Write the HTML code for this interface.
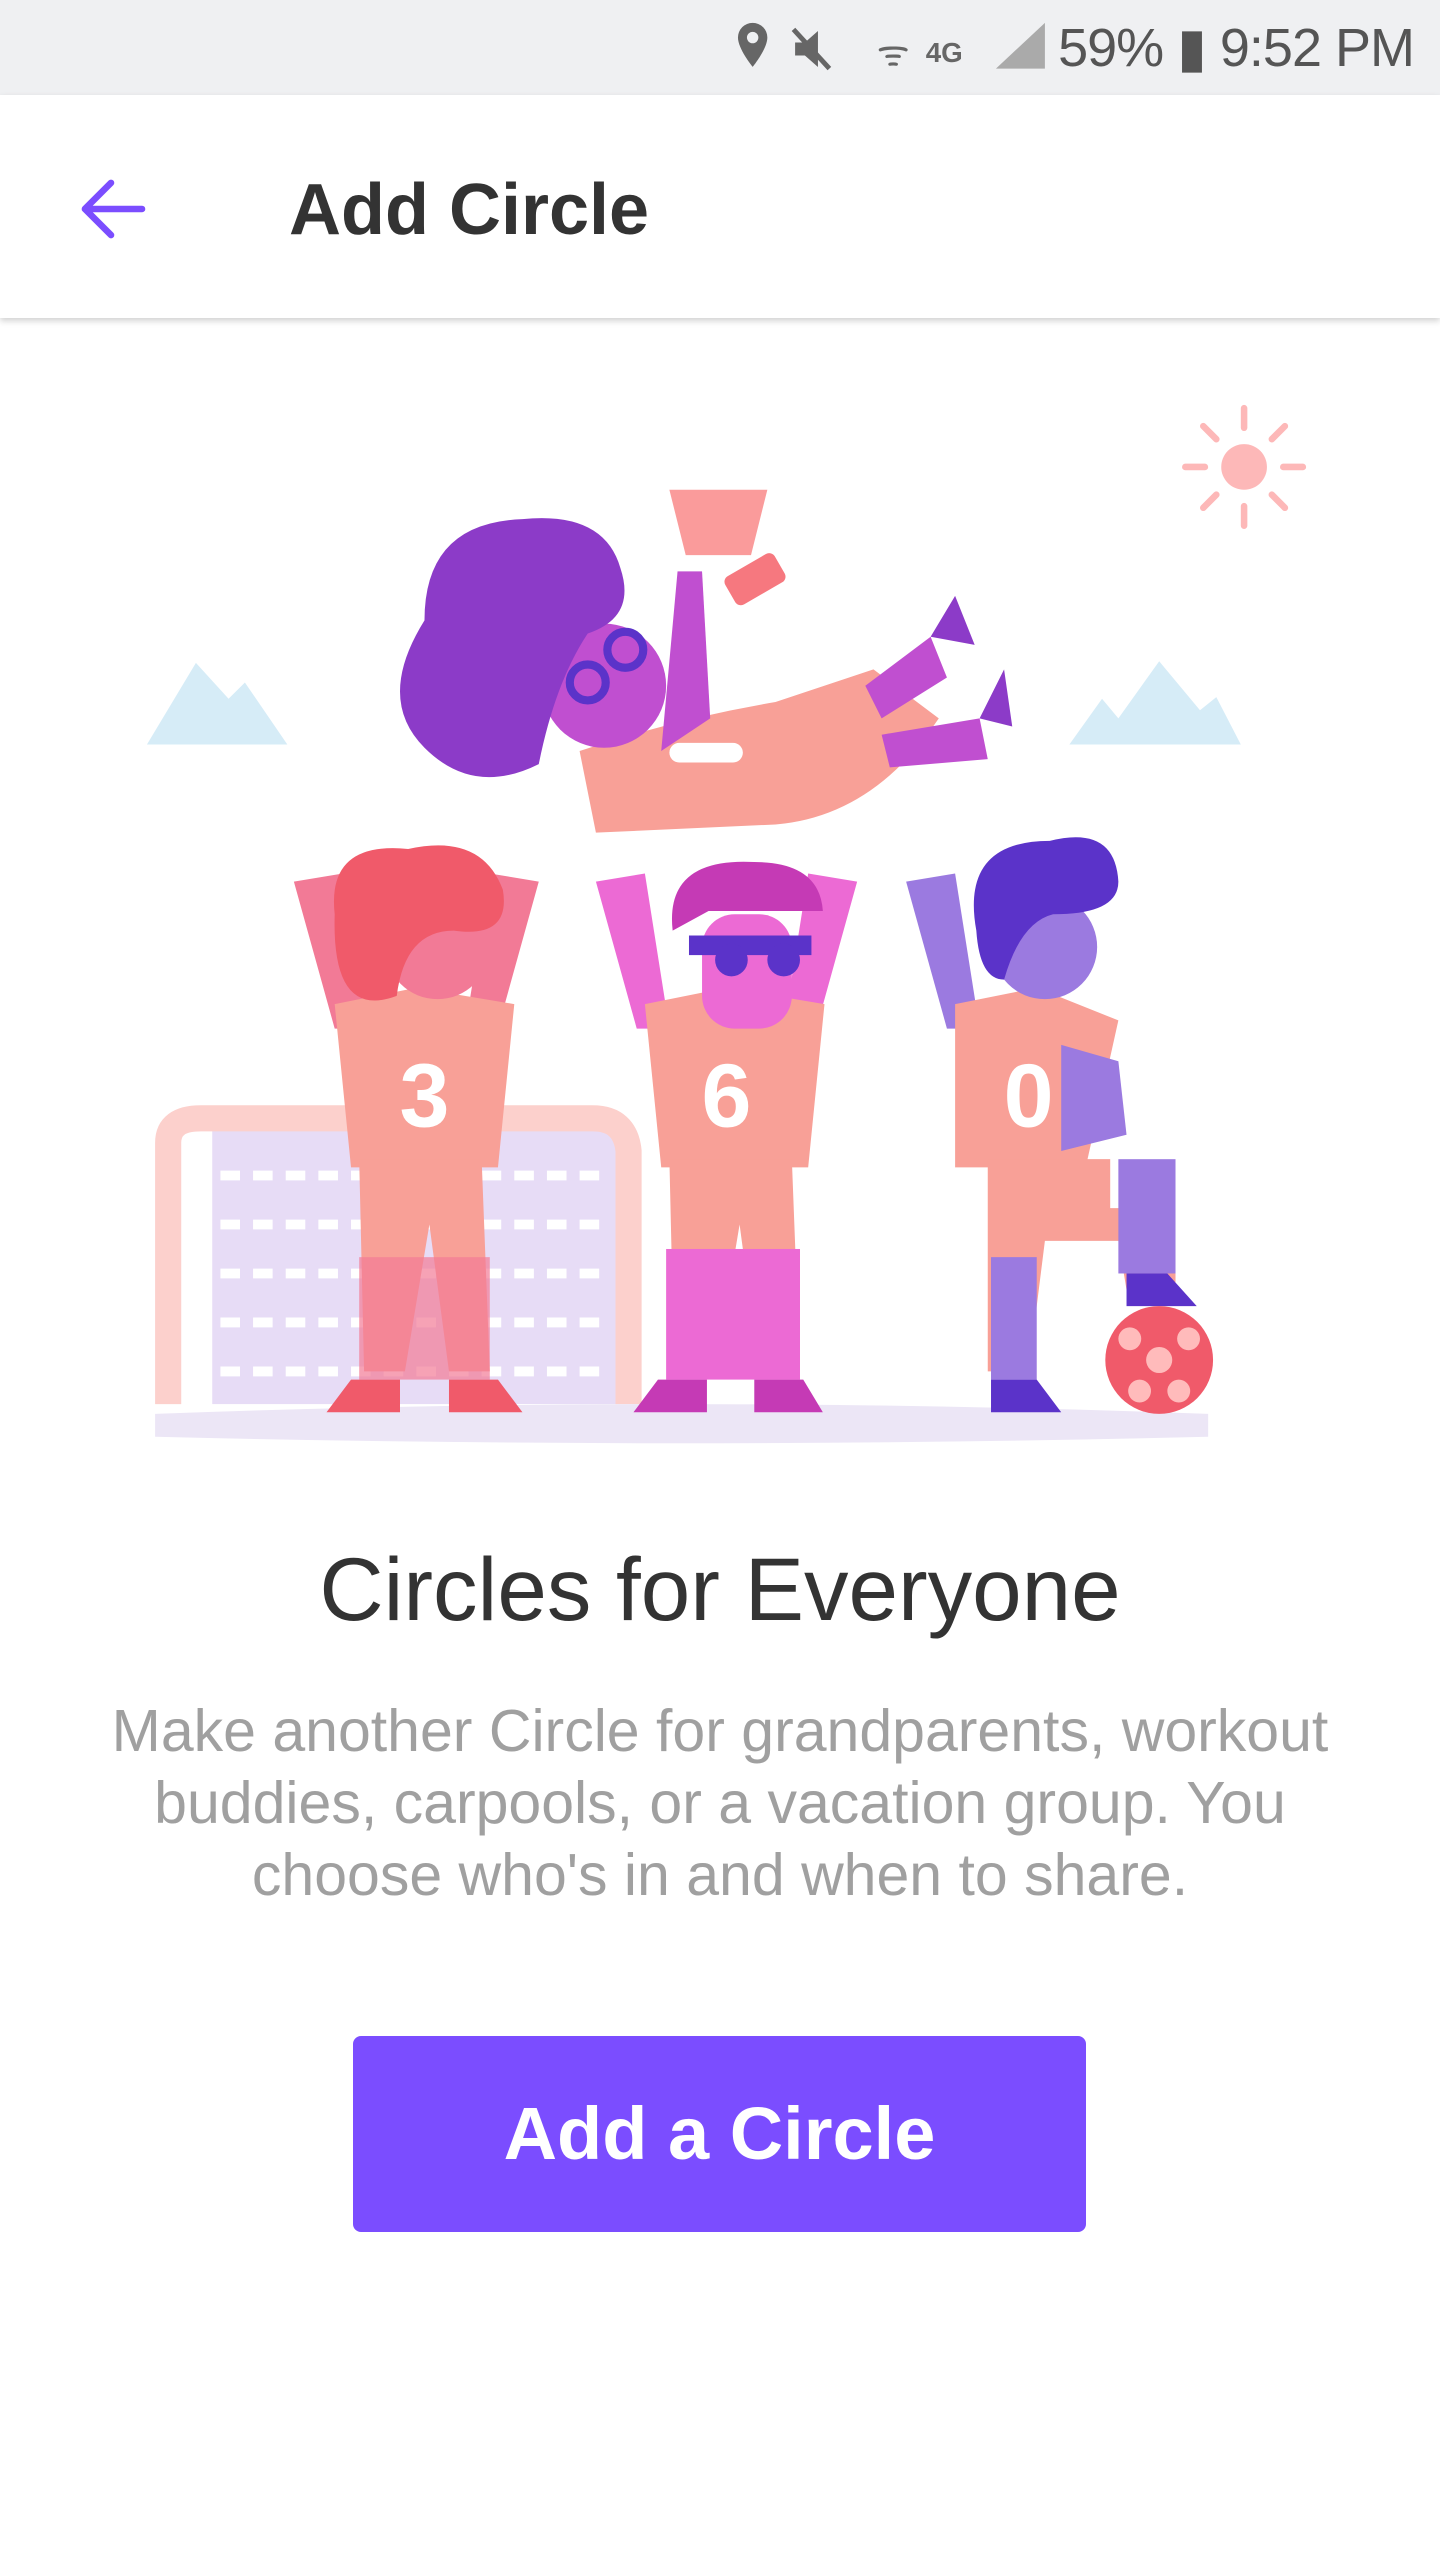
<!DOCTYPE html>
<html><head><meta charset="utf-8"><style>
html,body{margin:0;padding:0;width:1440px;height:2560px;background:#fff;overflow:hidden;font-family:"Liberation Sans",sans-serif;position:relative}
.sb{position:absolute;left:0;top:0;width:1440px;height:95px;background:#eff0f2}
.sbt{position:absolute;right:26px;top:16px;font-size:54px;color:#555;letter-spacing:-1px}
.bar{position:absolute;left:0;top:95px;width:1440px;height:223px;background:#fff;box-shadow:0 3px 6px rgba(0,0,0,.18)}
.title{position:absolute;left:289px;top:74px;font-size:72px;color:#333;font-weight:bold}
h1{position:absolute;left:0;width:1440px;top:1538px;margin:0;text-align:center;font-weight:normal;font-size:89px;color:#333}
.body{position:absolute;left:40px;width:1360px;top:1695px;text-align:center;font-size:59px;line-height:72px;color:#a0a0a0}
.btn{position:absolute;left:353px;top:2036px;width:733px;height:196px;background:#7b4dff;border-radius:8px;color:#fff;font-weight:bold;font-size:74px;text-align:center;line-height:196px}
svg{position:absolute;left:0;top:0}
</style></head><body>
<div class="sb"><div class="sbt">59%&nbsp;▮ 9:52 PM</div></div>
<svg width="1440" height="2560" viewBox="0 0 882 1568">
<g fill="#666"><path d="M461 14a9 9 0 0 1 9 9c0 7-9 18-9 18s-9-11-9-18a9 9 0 0 1 9-9z"/><circle cx="461" cy="23" r="3.5" fill="#eff0f2"/>
<path d="M487 26h6l8-7v22l-8-7h-6z"/><path d="M486 18l22 24" stroke="#666" stroke-width="3"/>
<text x="537" y="40" font-size="22" font-family="Liberation Sans">ᯤ</text><text x="567" y="38" font-size="17" font-family="Liberation Sans" font-weight="bold">4G</text>
<path d="M610 42l30-28v28z" fill="#aaa"/></g>
</svg>
<div class="bar"><div class="title">Add Circle</div></div>
<svg width="1440" height="2560" viewBox="0 0 882 1568">
<path d="M87 127H52M68 111L52 127L68 143" stroke="#7b4dff" stroke-width="4" fill="none" stroke-linecap="round" stroke-linejoin="round" transform="translate(0,1)"/>
<circle cx="762" cy="286" r="14" fill="#fdb8b8"/>
<g stroke="#fdb8b8" stroke-width="4" stroke-linecap="round"><path d="M762 250v12M762 310v12M726 286h12M786 286h12M737 261l8 8M779 303l8 8M787 261l-8 8M745 303l-8 8"/></g>
<path d="M90 456l30-50 20 22 10-10 26 38z" fill="#d6ecf7"/>
<path d="M655 456l20-28 10 12 25-35 25 30 10-8 15 29z" fill="#d6ecf7"/>
<rect x="130" y="692" width="250" height="168" fill="#e7dcf6"/>
<g stroke="#fff" stroke-width="6" stroke-dasharray="12 8"><path d="M135 720h240M135 750h240M135 780h240M135 810h240M135 840h240"/></g>
<path d="M103 860V700q0-15 20-15h240q20 0 22 20v155" stroke="#fcd0cc" stroke-width="16" fill="none"/>
<path d="M95 866q320-12 645 0v14q-320 8-645 0z" fill="#ece6f6"/>
<path d="M355 460q60-20 120-30l60-20 40 30q-40 60-100 65l-110 5z" fill="#f8a097"/>
<path d="M530 420l40-30 10 25-40 25zM540 450l60-10 5 25-60 5z" fill="#c04fd0"/>
<path d="M570 390l15-25 12 30zM600 440l15-30 5 35z" fill="#8c3bc8"/>
<rect x="410" y="455" width="45" height="12" rx="6" fill="#fff"/>
<path d="M415 350l15 0 5 90-30 20z" fill="#c04fd0"/>
<path d="M410 300h60l-10 40h-40z" fill="#fa9b9b"/><rect x="445" y="345" width="35" height="20" rx="4" fill="#f6787f" transform="rotate(-30 462 355)"/>
<circle cx="370" cy="420" r="38" fill="#c04fd0"/>
<path d="M260 380q0-60 60-62q50-5 60 30q10 30-20 40q-20 30-30 80q-40 20-70-10q-30-30 0-78z" fill="#8c3bc8"/>
<circle cx="360" cy="418" r="11" fill="none" stroke="#5b33c9" stroke-width="5"/><circle cx="383" cy="398" r="11" fill="none" stroke="#5b33c9" stroke-width="5"/>
<g><path d="M180 540l25 90 20 0-15-95zM330 540l-25 90-20 0 15-95z" fill="#f27a96"/>
<path d="M205 615l50-10 60 10-10 100h-90z" fill="#f8a097"/>
<path d="M220 710h75l5 130h-25l-12-90-15 90h-25z" fill="#f8a097"/>
<rect x="220" y="770" width="80" height="75" fill="#f27a96" opacity=".7"/>
<path d="M200 865l15-20h30v20zM275 865v-20h30l15 20z" fill="#f05a6a"/>
<circle cx="268" cy="580" r="32" fill="#f27a96"/>
<path d="M205 560q-5-45 45-40q45-10 58 25q5 30-30 25q-30 0-35 40q-40 15-38-50z" fill="#f05a6a"/>
<text x="260" y="690" font-size="55" font-weight="bold" fill="#fff" text-anchor="middle" font-family="Liberation Sans">3</text></g>
<g><path d="M365 540l25 90 20 0-15-95zM525 540l-25 90-20 0 15-95z" fill="#ec6ad4"/>
<path d="M395 615l50-10 60 10-10 100h-90z" fill="#f8a097"/>
<path d="M410 710h75l5 130h-25l-12-90-15 90h-25z" fill="#f8a097"/>
<rect x="408" y="765" width="82" height="80" fill="#ec6ad4"/>
<path d="M388 865l15-20h30v20zM462 865v-20h30l12 20z" fill="#c53ab5"/>
<rect x="430" y="560" width="55" height="70" rx="20" fill="#ec6ad4"/>
<path d="M412 570q-5-45 50-42q40 0 42 30h-70z" fill="#c53ab5"/>
<rect x="422" y="573" width="75" height="12" fill="#5b33c9"/><circle cx="448" cy="588" r="10" fill="#5b33c9"/><circle cx="480" cy="588" r="10" fill="#5b33c9"/>
<text x="445" y="690" font-size="55" font-weight="bold" fill="#fff" text-anchor="middle" font-family="Liberation Sans">6</text></g>
<g><path d="M555 540l25 90 20 0-15-95z" fill="#9b7ae0"/>
<path d="M585 615l50-10 50 20-20 90h-80z" fill="#f8a097"/>
<path d="M650 640l35 10 5 45-40 10z" fill="#9b7ae0"/>
<path d="M605 710h75v30h40v50h-30l-5-30h-45l-10 80h-25z" fill="#f8a097"/>
<rect x="685" y="710" width="35" height="70" fill="#9b7ae0"/>
<rect x="607" y="770" width="28" height="75" fill="#9b7ae0"/>
<path d="M607 865v-20h28l15 20zM690 800v-20h25l18 20z" fill="#5b33c9"/>
<circle cx="640" cy="580" r="32" fill="#9b7ae0"/>
<path d="M598 570q-10-55 45-55q40-10 42 25q0 20-40 20q-20 5-30 40q-15 0-17-30z" fill="#5b33c9"/>
<text x="630" y="690" font-size="55" font-weight="bold" fill="#fff" text-anchor="middle" font-family="Liberation Sans">0</text>
<circle cx="710" cy="833" r="33" fill="#f05a6a"/>
<g fill="#fbb"><circle cx="710" cy="833" r="8"/><circle cx="692" cy="820" r="7"/><circle cx="728" cy="820" r="7"/><circle cx="698" cy="852" r="7"/><circle cx="722" cy="852" r="7"/></g></g>
</svg>
<h1>Circles for Everyone</h1>
<div class="body">Make another Circle for grandparents, workout<br>buddies, carpools, or a vacation group. You<br>choose who's in and when to share.</div>
<div class="btn">Add a Circle</div>
</body></html>
